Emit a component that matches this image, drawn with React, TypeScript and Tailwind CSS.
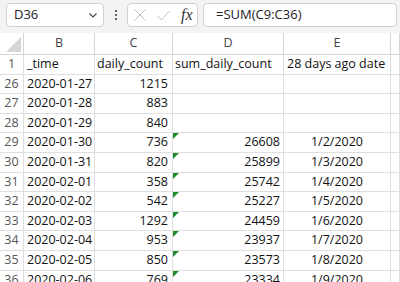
import React from "react";

type Row = { n: number; b: string; c: string; d?: string; e?: string; h: string; flag?: boolean };

const rows: Row[] = [
  { n: 26, b: "2020-01-27", c: "1215", h: "h-[19px]" },
  { n: 27, b: "2020-01-28", c: "883", h: "h-[20px]" },
  { n: 28, b: "2020-01-29", c: "840", h: "h-[19px]" },
  { n: 29, b: "2020-01-30", c: "736", d: "26608", e: "1/2/2020", h: "h-[20px]", flag: true },
  { n: 30, b: "2020-01-31", c: "820", d: "25899", e: "1/3/2020", h: "h-[20px]", flag: true },
  { n: 31, b: "2020-02-01", c: "358", d: "25742", e: "1/4/2020", h: "h-[19px]", flag: true },
  { n: 32, b: "2020-02-02", c: "542", d: "25227", e: "1/5/2020", h: "h-[20px]", flag: true },
  { n: 33, b: "2020-02-03", c: "1292", d: "24459", e: "1/6/2020", h: "h-[19px]", flag: true },
  { n: 34, b: "2020-02-04", c: "953", d: "23937", e: "1/7/2020", h: "h-[20px]", flag: true },
  { n: 35, b: "2020-02-05", c: "850", d: "23573", e: "1/8/2020", h: "h-[20px]", flag: true },
  { n: 36, b: "2020-02-06", c: "769", d: "23334", e: "1/9/2020", h: "h-[20px]", flag: true },
];

const cols = "grid grid-cols-[24px_71px_78px_111px_107px_1fr]";
const cell = "border-r border-b border-[#dedede] flex items-center overflow-hidden whitespace-nowrap";

function Toolbar() {
  return (
    <div className="h-[33px] bg-[#f3f3f3] flex items-start pt-[3px] pl-[6px] pr-[3px]">
      <div className="w-[98px] h-[24px] bg-white border border-[#d1d1d1] rounded-[4px] flex items-center justify-between pl-[7px] pr-[5px]">
        <span className="text-[13px] text-[#222]">D36</span>
        <svg width="10" height="10" viewBox="0 0 10 10">
          <path d="M1.5 3.5 L5 7 L8.5 3.5" fill="none" stroke="#444" strokeWidth="1.1" />
        </svg>
      </div>
      <div className="w-[23px] h-[24px] flex flex-col items-center justify-center gap-[2px]">
        <span className="w-[2px] h-[2px] bg-[#333] rounded-full" />
        <span className="w-[2px] h-[2px] bg-[#333] rounded-full" />
        <span className="w-[2px] h-[2px] bg-[#333] rounded-full" />
      </div>
      <div className="w-[71px] h-[24px] bg-white border border-[#d1d1d1] rounded-[4px] flex items-center pl-[6px] gap-[11px]">
        <svg width="12" height="12" viewBox="0 0 12 12">
          <path d="M0.5 0.5 L11.5 11.5 M11.5 0.5 L0.5 11.5" stroke="#c2c2c2" strokeWidth="1" fill="none" />
        </svg>
        <svg width="13" height="11" viewBox="0 0 13 11">
          <path d="M0.5 6 L4.5 10 L12.5 1" stroke="#c2c2c2" strokeWidth="1" fill="none" />
        </svg>
        <span className="font-['Liberation_Serif',serif] italic text-[16px] text-[#333] leading-none">fx</span>
      </div>
      <div className="ml-[5px] flex-1 h-[24px] bg-white border border-[#d1d1d1] rounded-[4px] flex items-center pl-[12px]">
        <span className="text-[13px] text-[#222]">=SUM(C9:C36)</span>
      </div>
    </div>
  );
}

export default function App() {
  return (
    <div className="w-[400px] h-[282px] overflow-hidden bg-white font-['Open_Sans',sans-serif] text-[12.5px] text-[#111]">
      <Toolbar />
      <div className={`${cols} h-[22px]`}>
        <div className="border-r border-b border-[#d4d4d4] relative">
          <svg className="absolute right-[2px] bottom-[2px]" width="15" height="15" viewBox="0 0 15 15">
            <path d="M15 0 L15 15 L0 15 Z" fill="#d6d6d6" />
          </svg>
        </div>
        {["B", "C", "D", "E", ""].map((l, i) => (
          <div key={i} className="border-r border-b border-[#d4d4d4] flex items-center justify-center text-[#444]">
            {l}
          </div>
        ))}
      </div>
      <div className={`${cols} h-[20px]`}>
        <div className={`${cell} justify-center text-[#555]`}>1</div>
        <div className={`${cell} pl-[3px]`}>_time</div>
        <div className={`${cell} pl-[2px]`}>daily_count</div>
        <div className={`${cell} pl-[2px]`}>sum_daily_count</div>
        <div className={`${cell} pl-[3px]`}>28 days ago date</div>
        <div className={cell} />
      </div>
      {rows.map((r) => (
        <div key={r.n} className={`${cols} ${r.h}`}>
          <div className={`${cell} justify-center text-[#555]`}>{r.n}</div>
          <div className={`${cell} pl-[3px]`}>{r.b}</div>
          <div className={`${cell} justify-end pr-[4px]`}>{r.c}</div>
          <div className={`${cell} justify-end pr-[3px] relative`}>
            {r.flag && (
              <svg className="absolute left-0 top-0" width="6" height="6" viewBox="0 0 6 6">
                <path d="M0 0 L6 0 L0 6 Z" fill="#1e8a2e" />
              </svg>
            )}
            {r.d}
          </div>
          <div className={`${cell} justify-center`}>{r.e}</div>
          <div className={cell} />
        </div>
      ))}
    </div>
  );
}
